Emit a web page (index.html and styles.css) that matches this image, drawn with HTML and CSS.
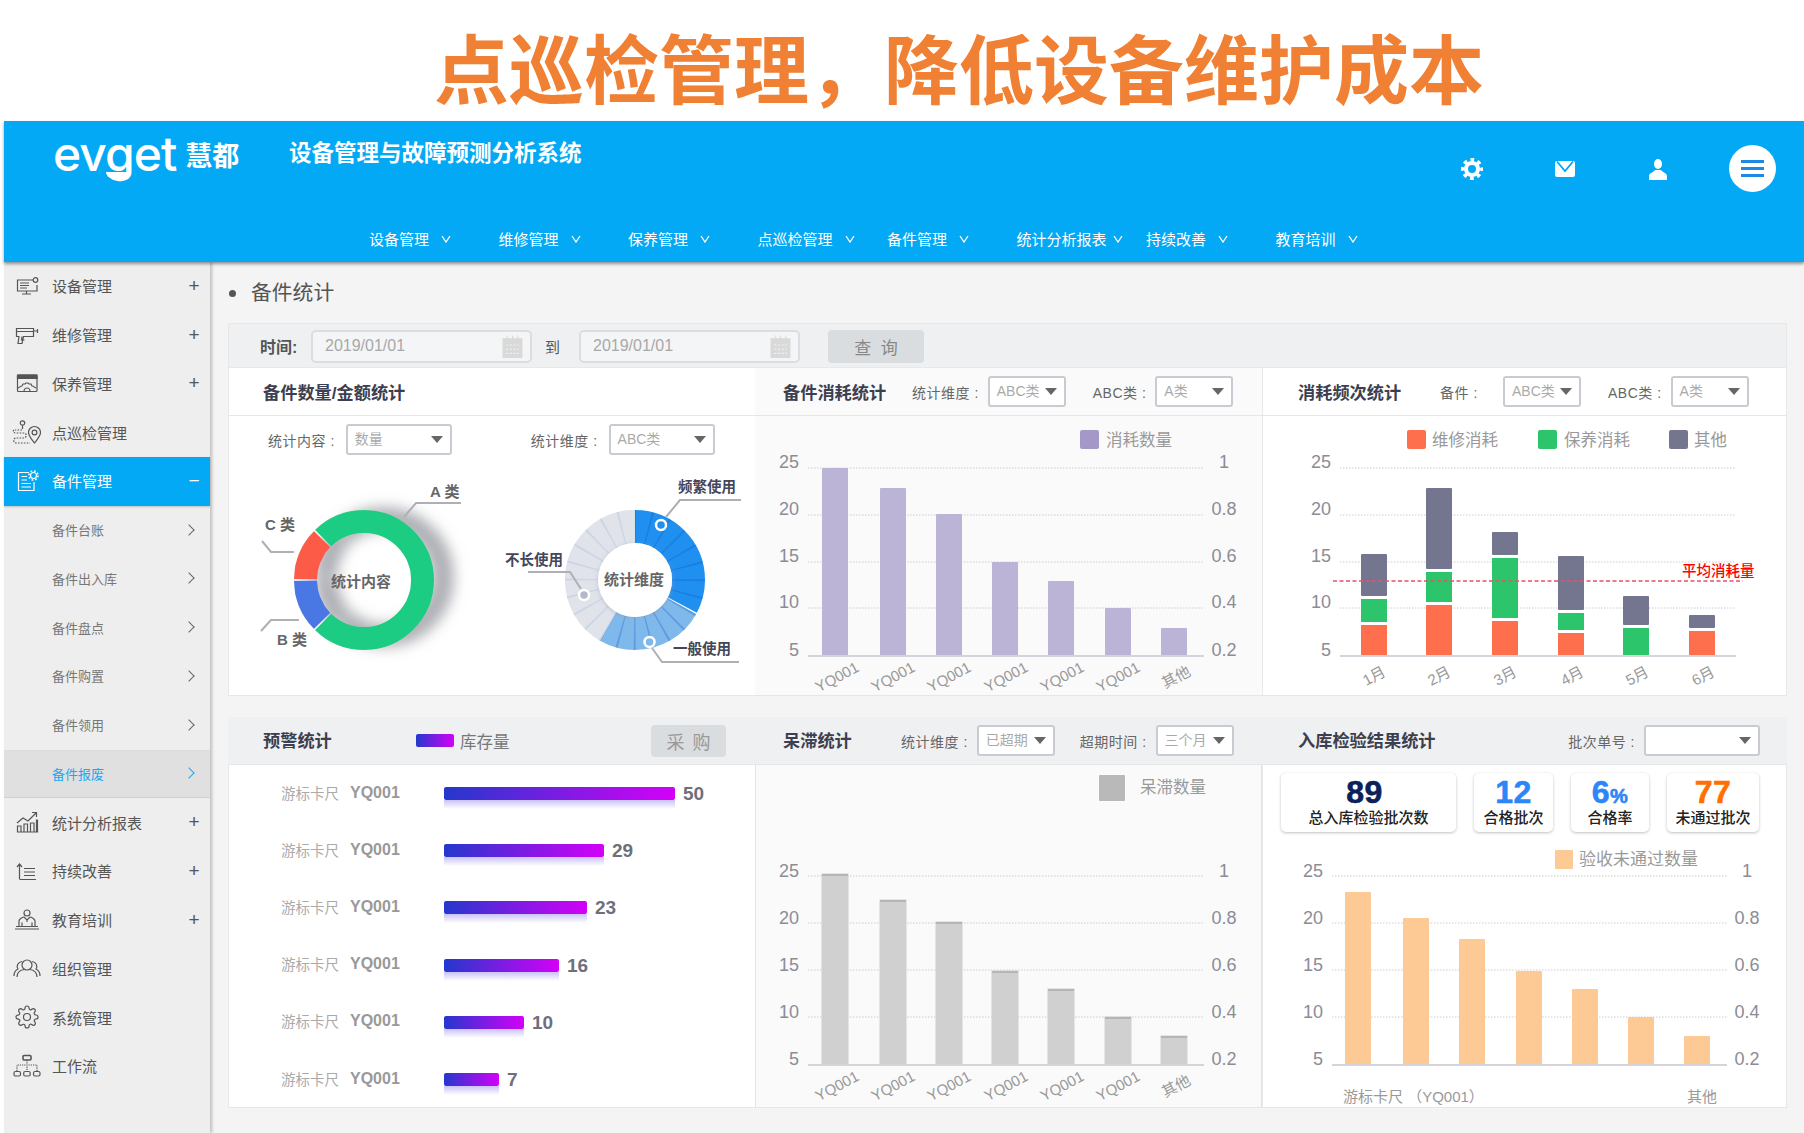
FILE: index.html
```html
<!DOCTYPE html>
<html lang="zh-CN">
<head>
    <meta charset="UTF-8">
    <meta name="viewport" content="width=device-width, initial-scale=1.0">
    <title>点巡检管理，降低设备维护成本</title>
    <link rel="stylesheet" href="styles.css">
</head>
<body>
    <div class="banner">点巡检管理，降低设备维护成本</div>

    <div class="app">
        <header class="topbar">
            <div class="topbar-main">
                <div class="logo"><span class="logo-en">evget</span><span class="logo-cn">慧都</span></div>
                <div class="system-name">设备管理与故障预测分析系统</div>
                <div class="top-icons">
                    <svg class="top-icon" viewBox="0 0 24 24"><circle cx="12" cy="12" r="6" fill="none" stroke="#fff" stroke-width="4"/><circle cx="12" cy="12" r="9" fill="none" stroke="#fff" stroke-width="4" stroke-dasharray="3.6 3.47" stroke-dashoffset="1.8"/></svg>
                    <svg class="top-icon" viewBox="0 0 24 24"><rect x="2" y="4" width="20" height="16" rx="2" fill="#fff"/><path d="M4 4.5 12 14l8-9.500" fill="none" stroke="#04a9f5" stroke-width="1.8"/></svg>
                    <svg class="top-icon" viewBox="0 0 24 24"><ellipse cx="12" cy="7" rx="4" ry="5" fill="#fff"/><path d="M3 23v-4c0-3 5-4 6-6h6c1 2 6 3 6 6v4z" fill="#fff"/></svg>
                    <button class="menu-btn"><span></span><span></span><span></span></button>
                </div>
            </div>
            <nav class="topnav">
                <a class="nav-item">设备管理<svg class="nav-chev" viewBox="0 0 10 8"><path d="M1 1l4 6 4-6"/></svg></a>
                <a class="nav-item">维修管理<svg class="nav-chev" viewBox="0 0 10 8"><path d="M1 1l4 6 4-6"/></svg></a>
                <a class="nav-item">保养管理<svg class="nav-chev" viewBox="0 0 10 8"><path d="M1 1l4 6 4-6"/></svg></a>
                <a class="nav-item">点巡检管理<svg class="nav-chev" viewBox="0 0 10 8"><path d="M1 1l4 6 4-6"/></svg></a>
                <a class="nav-item">备件管理<svg class="nav-chev" viewBox="0 0 10 8"><path d="M1 1l4 6 4-6"/></svg></a>
                <a class="nav-item nav-item-long">统计分析报表<svg class="nav-chev" viewBox="0 0 10 8"><path d="M1 1l4 6 4-6"/></svg></a>
                <a class="nav-item">持续改善<svg class="nav-chev" viewBox="0 0 10 8"><path d="M1 1l4 6 4-6"/></svg></a>
                <a class="nav-item">教育培训<svg class="nav-chev" viewBox="0 0 10 8"><path d="M1 1l4 6 4-6"/></svg></a>
            </nav>
        </header>

        <div class="layout">
            <aside class="sidebar">
                <a class="menu-item">
                    <svg class="menu-icon" viewBox="0 0 30 24"><path d="M21 6H5.500v11H25v-6"/><path d="M8 9h9M8 11.500h9M8 14h7M10 20h9M14.500 17v3"/><circle cx="23.500" cy="6" r="2.300"/></svg>
                    设备管理<i class="mark">+</i>
                </a>
                <a class="menu-item">
                    <svg class="menu-icon" viewBox="0 0 30 24"><path d="M4.500 5.500h17v8h-10l-1.500 7H6l1-7H4.500zM21.500 8H25M25.500 6v4M4.500 8.500h17M10 13.500l-.5 3.500h3"/></svg>
                    维修管理<i class="mark">+</i>
                </a>
                <a class="menu-item">
                    <svg class="menu-icon" viewBox="0 0 30 24"><rect x="5.500" y="4" width="19.500" height="16.500" rx="1"/><path class="fill" d="M5.500 4H25v3.500H5.500z"/><path d="M6 17c2-.5 2-2 4-2l1-2h2l1-1h2l1 1h2l1 2c2 0 2 1.500 4 2M12 20.500c0-2 1.500-3.500 3-3.500s3 1.500 3 3.500"/></svg>
                    保养管理<i class="mark">+</i>
                </a>
                <a class="menu-item">
                    <svg class="menu-icon" viewBox="0 0 30 24"><circle cx="10.500" cy="3" r="2.200"/><path d="M10.500 5.500V9"/><path stroke-dasharray="1.600 1.300" d="M10 10H3M2 10c-2 2 0 3 3 3h7c3 0 3 5 0 5H4c-3 0-3 5 0 5h14"/><path d="M22.500 23c-3-4-6-7-6-10.500a6 6 0 0 1 12 0c0 3.500-3 6.500-6 10.500z"/><circle cx="22.500" cy="12.500" r="2.400"/></svg>
                    点巡检管理
                </a>
                <a class="menu-item active">
                    <svg class="menu-icon" viewBox="0 0 30 24"><path d="M17 3.500H6.500v18H22V13"/><path d="M9.500 7.500H15M9.500 11H15M9.500 14.500h9.500M9.500 18h9.500"/><circle cx="21.500" cy="6.500" r="3"/><circle cx="21.500" cy="6.500" r="4.600" stroke-width="1.500" stroke-dasharray="1.800 1.800"/></svg>
                    备件管理<i class="mark">−</i>
                </a>
                <a class="menu-item sub">备件台账<i class="chev"></i></a>
                <a class="menu-item sub">备件出入库<i class="chev"></i></a>
                <a class="menu-item sub">备件盘点<i class="chev"></i></a>
                <a class="menu-item sub">备件购置<i class="chev"></i></a>
                <a class="menu-item sub">备件领用<i class="chev"></i></a>
                <a class="menu-item sub current">备件报废<i class="chev"></i></a>
                <a class="menu-item">
                    <svg class="menu-icon" viewBox="0 0 30 24"><path d="M5.500 22v-6h3.500v6zM12 22v-8h3.500v8zM18.500 22v-9H22v9zM24.500 22V10H25.500v12zM5 22h21"/><path d="M5 13l6-5 5 3 8-8M20 2.500h4.500V7"/></svg>
                    统计分析报表<i class="mark">+</i>
                </a>
                <a class="menu-item">
                    <svg class="menu-icon" viewBox="0 0 30 24"><path d="M7.500 20V5M5 8l2.500-3L10 8M7.500 20.500H24M12 9.500h11M12 13h11M12 16.500h11"/></svg>
                    持续改善<i class="mark">+</i>
                </a>
                <a class="menu-item">
                    <svg class="menu-icon" viewBox="0 0 30 24"><circle cx="15" cy="5" r="3"/><path d="M7 18v-5c0-2 4-4 5-4l3 3 3-3c1 0 5 2 5 4v5M10 18v-3.500M20 18v-3.500M15 12v2M4 18.500h22M3 21h24"/></svg>
                    教育培训<i class="mark">+</i>
                </a>
                <a class="menu-item">
                    <svg class="menu-icon" viewBox="0 0 30 24"><circle cx="15" cy="9" r="5"/><path d="M5 21c0-5 4-7 7-7.500M25 21c0-5-4-7-7-7.500M2 20c0-4 2-6 4-7-2-3 0-7 4-7.500M28 20c0-4-2-6-4-7 2-3 0-7-4-7.500"/></svg>
                    组织管理
                </a>
                <a class="menu-item">
                    <svg class="menu-icon" viewBox="0 0 24 24"><circle cx="12" cy="12" r="3.500"/><path d="M19.400 15a1.650 1.650 0 0 0 .33 1.820l.06.06a2 2 0 0 1 0 2.830 2 2 0 0 1-2.830 0l-.06-.06a1.650 1.650 0 0 0-1.820-.33 1.650 1.650 0 0 0-1 1.510V21a2 2 0 0 1-2 2 2 2 0 0 1-2-2v-.09A1.650 1.650 0 0 0 9 19.400a1.650 1.650 0 0 0-1.820.33l-.06.06a2 2 0 0 1-2.830 0 2 2 0 0 1 0-2.830l.06-.06a1.650 1.650 0 0 0 .33-1.820 1.650 1.650 0 0 0-1.510-1H3a2 2 0 0 1-2-2 2 2 0 0 1 2-2h.09A1.650 1.650 0 0 0 4.600 9a1.650 1.650 0 0 0-.33-1.820l-.06-.06a2 2 0 0 1 0-2.830 2 2 0 0 1 2.830 0l.06.06a1.650 1.650 0 0 0 1.820.33H9a1.650 1.650 0 0 0 1-1.510V3a2 2 0 0 1 2-2 2 2 0 0 1 2 2v.09a1.650 1.650 0 0 0 1 1.510 1.650 1.650 0 0 0 1.820-.33l.06-.06a2 2 0 0 1 2.830 0 2 2 0 0 1 0 2.830l-.06.06a1.650 1.650 0 0 0-.33 1.820V9a1.650 1.650 0 0 0 1.510 1H21a2 2 0 0 1 2 2 2 2 0 0 1-2 2h-.09a1.650 1.650 0 0 0-1.510 1z"/></svg>
                    系统管理
                </a>
                <a class="menu-item">
                    <svg class="menu-icon" viewBox="0 0 30 24"><rect x="11" y="1.500" width="8" height="4.500" rx="1" stroke-width="1.600"/><rect x="2" y="17.500" width="6.500" height="4.500" rx="1.500"/><rect x="11.700" y="17.500" width="6.500" height="4.500" rx="1.500"/><rect x="21.500" y="17.500" width="6.500" height="4.500" rx="1.500"/><path stroke-dasharray="1.200 1" d="M15 6v11.500M5 17v-6h20v6"/></svg>
                    工作流
                </a>
            </aside>

            <main class="content">
                <h2 class="page-title">备件统计</h2>

                <div class="query-bar">
                    <span class="query-label">时间:</span>
                    <div class="date-input">2019/01/01
                        <svg class="cal-icon" viewBox="0 0 20 22"><path d="M1 4h18v18H1zM5 1v5M10 1v5M15 1v5" fill="#d9d9d9" stroke="#d9d9d9"/><path d="M4 10h12M4 14h12M4 18h12" stroke="#f2f2f2" stroke-dasharray="2 1.500"/></svg>
                    </div>
                    <span class="query-to">到</span>
                    <div class="date-input">2019/01/01
                        <svg class="cal-icon" viewBox="0 0 20 22"><path d="M1 4h18v18H1zM5 1v5M10 1v5M15 1v5" fill="#d9d9d9" stroke="#d9d9d9"/><path d="M4 10h12M4 14h12M4 18h12" stroke="#f2f2f2" stroke-dasharray="2 1.500"/></svg>
                    </div>
                    <button class="btn-gray query-btn">查 询</button>
                </div>

                <section class="board board-top">
                    <div class="panel">
                        <div class="panel-head">
                            <h3 class="panel-title">备件数量/金额统计</h3>
                        </div>
                        <div class="select-row">
                            <div class="ctl"><label>统计内容 :</label><div class="sel sel-wide">数量</div></div>
                            <div class="ctl"><label>统计维度 :</label><div class="sel sel-wide">ABC类</div></div>
                        </div>
                        <svg class="donuts" width="527" height="236" viewBox="228 460 527 236">
                            <defs>
                                <filter id="ringShadow" x="-40%" y="-40%" width="190%" height="190%"><feDropShadow dx="3" dy="20" stdDeviation="7" flood-color="#8f9198" flood-opacity=".72"/></filter>
                                <filter id="holeShadow" x="-30%" y="-30%" width="160%" height="160%"><feDropShadow dx="0" dy="1" stdDeviation="2" flood-color="#99a" flood-opacity=".5"/></filter>
                            </defs>
                            <g class="arc" transform="rotate(-90 364 580)" filter="url(#ringShadow)" fill="none" stroke-width="23">
                                <circle cx="364" cy="580" r="58.500" pathLength="360" stroke="#1fcc82" stroke-dasharray="268.600 91.400" stroke-dashoffset="-315.700"/>
                                <circle cx="364" cy="580" r="58.500" pathLength="360" stroke="#fc5c46" stroke-dasharray="43.600 316.400" stroke-dashoffset="-270.700"/>
                                <circle cx="364" cy="580" r="58.500" pathLength="360" stroke="#4878e4" stroke-dasharray="43.600 316.400" stroke-dashoffset="-225.700"/>
                            </g>
                            <text class="ring-center" x="361" y="587" text-anchor="middle">统计内容</text>
                            <polyline class="leader" points="404,517 416,503 461,503"/>
                            <polyline class="leader" points="262,541 271,552 294,552"/>
                            <polyline class="leader" points="261,631 271,620 299,620"/>
                            <text class="ring-label" x="430" y="497">A 类</text>
                            <text class="ring-label" x="265" y="530">C 类</text>
                            <text class="ring-label" x="277" y="645">B 类</text>

                            <g transform="rotate(-90 635 580)" fill="none" stroke-width="33">
                                <circle cx="635" cy="580" r="53.500" pathLength="360" stroke="#2090f0" stroke-dasharray="118 242"/>
                                <circle cx="635" cy="580" r="53.500" pathLength="360" stroke="#7fb9ec" stroke-dasharray="91 269" stroke-dashoffset="-119"/>
                                <circle cx="635" cy="580" r="53.500" pathLength="360" stroke="#e0e3ea" stroke-dasharray="150 210" stroke-dashoffset="-210"/>
                                <circle cx="635" cy="580" r="53.500" stroke="#0a50c0" stroke-opacity=".28" stroke-dasharray="1.600 12.406" stroke-dashoffset=".8"/>
                                <circle cx="635" cy="580" r="53.500" pathLength="360" stroke="#e0e3ea" stroke-opacity=".65" stroke-dasharray="150 210" stroke-dashoffset="-210"/>
                            </g>
                            <circle cx="635" cy="580" r="37" fill="#fff" filter="url(#holeShadow)"/>
                            <text class="ring-center" x="634" y="585" text-anchor="middle">统计维度</text>
                            <polyline class="leader" points="666,517 680,500 741,500"/>
                            <polyline class="leader" points="528,572 570,572 581,589"/>
                            <polyline class="leader" points="652,648 662,662 739,662"/>
                            <circle cx="661" cy="525" r="5" fill="#2090f0" stroke="#fff" stroke-width="2.500"/>
                            <circle cx="584" cy="595" r="5" fill="#b4b8cb" stroke="#fff" stroke-width="2.500"/>
                            <circle cx="649.500" cy="642" r="5" fill="#7fb9ec" stroke="#fff" stroke-width="2.500"/>
                            <text class="ring-tag" x="678" y="492">频繁使用</text>
                            <text class="ring-tag" x="505" y="565">不长使用</text>
                            <text class="ring-tag" x="673" y="654">一般使用</text>
                        </svg>
                    </div>

                    <div class="panel panel-soft">
                        <div class="panel-head panel-head-2">
                            <h3 class="panel-title title-129">备件消耗统计</h3>
                            <div class="ctl"><label>统计维度 :</label><div class="sel">ABC类</div></div>
                            <div class="ctl"><label>ABC类 :</label><div class="sel">A类</div></div>
                        </div>
                        <svg class="chart" width="507" height="280" viewBox="755 416 507 280">
                            <rect x="1080" y="430" width="19" height="19" rx="2" fill="#a498c6"/>
                            <text class="legend" x="1106" y="446">消耗数量</text>
                            <path class="grid" d="M808 468H1204M808 515H1204M808 562H1204M808 608H1204"/>
                            <g class="ticks" text-anchor="end"><text x="799" y="468">25</text><text x="799" y="515">20</text><text x="799" y="562">15</text><text x="799" y="608">10</text><text x="799" y="656">5</text></g>
                            <g class="ticks" text-anchor="middle"><text x="1224" y="468">1</text><text x="1224" y="515">0.8</text><text x="1224" y="562">0.6</text><text x="1224" y="608">0.4</text><text x="1224" y="656">0.2</text></g>
                            <g fill="#bbb4d6">
                                <rect x="822" y="468" width="26" height="188" rx="1"/>
                                <rect x="880" y="488" width="26" height="168" rx="1"/>
                                <rect x="936" y="514" width="26" height="142" rx="1"/>
                                <rect x="992" y="562" width="26" height="94" rx="1"/>
                                <rect x="1048" y="581" width="26" height="75" rx="1"/>
                                <rect x="1105" y="608" width="26" height="48" rx="1"/>
                                <rect x="1161" y="628" width="26" height="28" rx="1"/>
                            </g>
                            <path class="base" d="M808 656H1204"/>
                            <g class="xlab" text-anchor="middle">
                                <text transform="translate(837 677) rotate(-28)" dy=".35em">YQ001</text>
                                <text transform="translate(893 677) rotate(-28)" dy=".35em">YQ001</text>
                                <text transform="translate(949 677) rotate(-28)" dy=".35em">YQ001</text>
                                <text transform="translate(1006 677) rotate(-28)" dy=".35em">YQ001</text>
                                <text transform="translate(1062 677) rotate(-28)" dy=".35em">YQ001</text>
                                <text transform="translate(1118 677) rotate(-28)" dy=".35em">YQ001</text>
                                <text transform="translate(1176 677) rotate(-28)" dy=".35em">其他</text>
                            </g>
                        </svg>
                    </div>

                    <div class="panel">
                        <div class="panel-head panel-head-3">
                            <h3 class="panel-title title-142">消耗频次统计</h3>
                            <div class="ctl ctl-parts"><label>备件 :</label><div class="sel">ABC类</div></div>
                            <div class="ctl"><label>ABC类 :</label><div class="sel">A类</div></div>
                        </div>
                        <svg class="chart" width="525" height="280" viewBox="1262 416 525 280">
                            <rect x="1407" y="430" width="19" height="19" rx="2" fill="#fe6f4e"/>
                            <text class="legend" x="1432" y="446">维修消耗</text>
                            <rect x="1538" y="430" width="19" height="19" rx="2" fill="#2dc56b"/>
                            <text class="legend" x="1564" y="446">保养消耗</text>
                            <rect x="1669" y="430" width="19" height="19" rx="2" fill="#74768f"/>
                            <text class="legend" x="1694" y="446">其他</text>
                            <path class="grid" d="M1340 468H1736M1340 515H1736M1340 562H1736M1340 608H1736"/>
                            <g class="ticks" text-anchor="end"><text x="1331" y="468">25</text><text x="1331" y="515">20</text><text x="1331" y="562">15</text><text x="1331" y="608">10</text><text x="1331" y="656">5</text></g>
                            <g fill="#74768f">
                                <rect x="1361" y="554" width="26" height="42" rx="1"/>
                                <rect x="1426" y="488" width="26" height="81" rx="1"/>
                                <rect x="1492" y="532" width="26" height="23" rx="1"/>
                                <rect x="1558" y="556" width="26" height="54" rx="1"/>
                                <rect x="1623" y="596" width="26" height="29" rx="1"/>
                                <rect x="1689" y="615" width="26" height="13" rx="1"/>
                            </g>
                            <g fill="#2dc56b">
                                <rect x="1361" y="599" width="26" height="23"/>
                                <rect x="1426" y="572" width="26" height="30"/>
                                <rect x="1492" y="558" width="26" height="60"/>
                                <rect x="1558" y="613" width="26" height="17"/>
                                <rect x="1623" y="628" width="26" height="27"/>
                            </g>
                            <g fill="#fe6f4e">
                                <rect x="1361" y="625" width="26" height="30"/>
                                <rect x="1426" y="605" width="26" height="50"/>
                                <rect x="1492" y="621" width="26" height="34"/>
                                <rect x="1558" y="633" width="26" height="22"/>
                                <rect x="1689" y="631" width="26" height="24"/>
                            </g>
                            <path class="base" d="M1340 656H1736"/>
                            <path class="avg-line" d="M1333 581H1743"/>
                            <text class="avg-text" x="1682" y="576">平均消耗量</text>
                            <g class="xlab" text-anchor="middle">
                                <text transform="translate(1374 676) rotate(-28)" dy=".35em">1月</text>
                                <text transform="translate(1439 676) rotate(-28)" dy=".35em">2月</text>
                                <text transform="translate(1505 676) rotate(-28)" dy=".35em">3月</text>
                                <text transform="translate(1572 676) rotate(-28)" dy=".35em">4月</text>
                                <text transform="translate(1637 676) rotate(-28)" dy=".35em">5月</text>
                                <text transform="translate(1703 676) rotate(-28)" dy=".35em">6月</text>
                            </g>
                        </svg>
                    </div>
                </section>

                <section class="board board-bottom">
                    <div class="panel">
                        <div class="panel-head panel-head-gray">
                            <h3 class="panel-title title-153">预警统计</h3>
                            <span class="grad-key"></span>
                            <span class="grad-text">库存量</span>
                            <button class="btn-gray buy-btn">采 购</button>
                        </div>
                        <div class="rank-list">
                            <div class="rank-row"><span class="rank-name">游标卡尺</span><b class="rank-code">YQ001</b><span class="rank-bar" style="width:231px"></span><b class="rank-num">50</b></div>
                            <div class="rank-row"><span class="rank-name">游标卡尺</span><b class="rank-code">YQ001</b><span class="rank-bar" style="width:160px"></span><b class="rank-num">29</b></div>
                            <div class="rank-row"><span class="rank-name">游标卡尺</span><b class="rank-code">YQ001</b><span class="rank-bar" style="width:143px"></span><b class="rank-num">23</b></div>
                            <div class="rank-row"><span class="rank-name">游标卡尺</span><b class="rank-code">YQ001</b><span class="rank-bar" style="width:115px"></span><b class="rank-num">16</b></div>
                            <div class="rank-row"><span class="rank-name">游标卡尺</span><b class="rank-code">YQ001</b><span class="rank-bar" style="width:80px"></span><b class="rank-num">10</b></div>
                            <div class="rank-row"><span class="rank-name">游标卡尺</span><b class="rank-code">YQ001</b><span class="rank-bar" style="width:55px"></span><b class="rank-num">7</b></div>
                        </div>
                    </div>

                    <div class="panel panel-soft">
                        <div class="panel-head panel-head-gray panel-head-2">
                            <h3 class="panel-title title-118">呆滞统计</h3>
                            <div class="ctl"><label>统计维度 :</label><div class="sel">已超期</div></div>
                            <div class="ctl ctl-close"><label>超期时间 :</label><div class="sel">三个月</div></div>
                        </div>
                        <svg class="chart" width="507" height="343" viewBox="755 765 507 343">
                            <rect x="1099" y="775" width="26" height="26" rx="1" fill="#b9b9b9"/>
                            <text class="legend" x="1140" y="793">呆滞数量</text>
                            <path class="grid" d="M808 876H1204M808 923H1204M808 970H1204M808 1017H1204"/>
                            <g class="ticks" text-anchor="end"><text x="799" y="877">25</text><text x="799" y="924">20</text><text x="799" y="971">15</text><text x="799" y="1018">10</text><text x="799" y="1065">5</text></g>
                            <g class="ticks" text-anchor="middle"><text x="1224" y="877">1</text><text x="1224" y="924">0.8</text><text x="1224" y="971">0.6</text><text x="1224" y="1018">0.4</text><text x="1224" y="1065">0.2</text></g>
                            <g fill="#d0d0d0" stroke="#d0d0d0">
                                <rect x="822" y="874" width="26" height="191"/>
                                <rect x="880" y="900" width="26" height="165"/>
                                <rect x="936" y="922" width="26" height="143"/>
                                <rect x="992" y="971" width="26" height="94"/>
                                <rect x="1048" y="989" width="26" height="76"/>
                                <rect x="1105" y="1017" width="26" height="48"/>
                                <rect x="1161" y="1036" width="26" height="29"/>
                            </g>
                            <path class="bar-cap" d="M822 875h26M880 901h26M936 923h26M992 972h26M1048 990h26M1105 1018h26M1161 1037h26"/>
                            <path class="base" d="M808 1065H1204"/>
                            <g class="xlab" text-anchor="middle">
                                <text transform="translate(837 1086) rotate(-28)" dy=".35em">YQ001</text>
                                <text transform="translate(893 1086) rotate(-28)" dy=".35em">YQ001</text>
                                <text transform="translate(949 1086) rotate(-28)" dy=".35em">YQ001</text>
                                <text transform="translate(1006 1086) rotate(-28)" dy=".35em">YQ001</text>
                                <text transform="translate(1062 1086) rotate(-28)" dy=".35em">YQ001</text>
                                <text transform="translate(1118 1086) rotate(-28)" dy=".35em">YQ001</text>
                                <text transform="translate(1176 1086) rotate(-28)" dy=".35em">其他</text>
                            </g>
                        </svg>
                    </div>

                    <div class="panel">
                        <div class="panel-head panel-head-gray panel-head-3">
                            <h3 class="panel-title">入库检验结果统计</h3>
                            <div class="ctl ctl-right"><label>批次单号 :</label><div class="sel sel-batch"></div></div>
                        </div>
                        <div class="stat-row">
                            <div class="stat stat-total"><strong class="num-navy">89</strong><span>总入库检验批次数</span></div>
                            <div class="stat stat-ok"><strong class="num-blue">12</strong><span>合格批次</span></div>
                            <div class="stat stat-rate"><strong class="num-blue">6<small>%</small></strong><span>合格率</span></div>
                            <div class="stat stat-fail"><strong class="num-orange">77</strong><span>未通过批次</span></div>
                        </div>
                        <svg class="chart" width="525" height="276" viewBox="1262 832 525 276">
                            <rect x="1555" y="850" width="18" height="19" rx="1" fill="#fdca96"/>
                            <text class="legend legend-long" x="1579" y="865">验收未通过数量</text>
                            <path class="grid" d="M1332 876H1727M1332 923H1727M1332 970H1727M1332 1017H1727"/>
                            <g class="ticks" text-anchor="end"><text x="1323" y="877">25</text><text x="1323" y="924">20</text><text x="1323" y="971">15</text><text x="1323" y="1018">10</text><text x="1323" y="1065">5</text></g>
                            <g class="ticks" text-anchor="middle"><text x="1747" y="877">1</text><text x="1747" y="924">0.8</text><text x="1747" y="971">0.6</text><text x="1747" y="1018">0.4</text><text x="1747" y="1065">0.2</text></g>
                            <g fill="#fdca96">
                                <rect x="1345" y="892" width="26" height="173" rx="1"/>
                                <rect x="1403" y="918" width="26" height="147" rx="1"/>
                                <rect x="1459" y="939" width="26" height="126" rx="1"/>
                                <rect x="1516" y="971" width="26" height="94" rx="1"/>
                                <rect x="1572" y="989" width="26" height="76" rx="1"/>
                                <rect x="1628" y="1017" width="26" height="48" rx="1"/>
                                <rect x="1684" y="1036" width="26" height="29" rx="1"/>
                            </g>
                            <path class="base" d="M1332 1065H1727"/>
                            <text class="xlab" x="1343" y="1102">游标卡尺 （YQ001）</text>
                            <text class="xlab" x="1687" y="1102">其他</text>
                        </svg>
                    </div>
                </section>
            </main>
        </div>
    </div>
</body>
</html>
```

FILE: styles.css
```css
* { box-sizing: border-box; }
body { margin: 0; background: #fff; font-family: "Liberation Sans", "Noto Sans CJK SC", sans-serif; color: #555; }
h2, h3 { margin: 0; }
button { font-family: inherit; border: none; }

.banner { height: 121px; padding: 12px 0 0 434px; font-size: 75px; line-height: 120px; font-weight: 700; color: #f08034; white-space: nowrap; overflow: hidden; }

.app { margin-left: 4px; background: #f4f4f4; }

/* top bar */
.topbar { position: relative; z-index: 2; height: 141px; background: #04a9f5; box-shadow: 0 2px 3px rgba(0,0,0,0.4); color: #fff; }
.topbar-main { display: flex; height: 94px; padding-left: 49px; }
.logo { position: relative; display: flex; height: 60px; align-items: center; margin-top: 3px; width: 236px; }
.logo-en { font-family: Inter, sans-serif; font-size: 48px; font-weight: 500; letter-spacing: -1px; line-height: 60px; }
.logo-cn { font-family: "Noto Sans CJK SC", sans-serif; font-size: 27px; font-weight: 700; margin-left: 9px; }
.logo::after { content: ""; position: absolute; left: 53px; top: 48px; width: 25px; height: 6px; background: #fff; border-radius: 0 0 14px 14px; }
.system-name { margin-top: 14px; font-size: 22.500px; line-height: 38px; font-weight: 700; white-space: nowrap; }
.top-icons { display: flex; align-items: center; margin-left: auto; height: 47px; margin-top: 24px; padding-right: 28px; }
.top-icon { width: 24px; height: 24px; margin-right: 69px; }
.menu-btn { display: flex; flex-direction: column; justify-content: center; gap: 4px; width: 47px; height: 47px; margin-left: -10px; padding: 0 12px; border-radius: 50%; background: #fff; }
.menu-btn span { display: block; height: 3px; background: #1e88e5; }
.topnav { display: flex; padding-left: 365px; height: 47px; }
.nav-item { display: flex; align-items: center; width: 129.500px; flex: none; font-size: 15px; white-space: nowrap; }
.nav-chev { width: 10px; height: 8px; margin-left: 12px; fill: none; stroke: #fff; stroke-width: 1.300; }
.nav-item-long .nav-chev { margin-left: 6px; }

/* side menu */
.layout { display: flex; }
.sidebar { width: 206px; flex: none; min-height: 871px; background: #eee; box-shadow: 2px 0 3px rgba(0,0,0,0.22); position: relative; z-index: 1; }
.menu-item { display: flex; align-items: center; height: 48.750px; padding: 0 0 1px 8px; font-size: 15px; color: #555; }
.menu-icon { width: 30px; height: 24px; margin-right: 10px; flex: none; fill: none; stroke: #555; stroke-width: 1.200; }
.menu-icon .fill { fill: #555; }
.mark { margin-left: auto; margin-right: 7px; width: 18px; text-align: center; font-style: normal; font-size: 19px; }
.sub { padding-left: 48px; font-size: 13px; color: #777; }
.chev { margin-left: auto; margin-right: 17px; width: 8px; height: 8px; border-top: 1.300px solid #666; border-right: 1.300px solid #666; transform: rotate(45deg); }
.active { background: #04a9f5; color: #fff; box-shadow: 0 1px 2px rgba(0,0,0,0.2); }
.active .menu-icon { stroke: #fff; }
.current { background: #e0e0e0; color: #1ea7f0; border-top: 1px solid #ddd; border-bottom: 1px solid #d0d0d0; }
.current .chev { border-color: #1ea7f0; }

/* main area */
.content { flex: 1; padding: 0 17px 25px 18px; }
.page-title { position: relative; height: 61px; padding-left: 23px; font-size: 20.800px; line-height: 62px; font-weight: 400; color: #555; }
.page-title::before { content: ""; position: absolute; left: 1px; top: 28px; width: 7px; height: 7px; border-radius: 50%; background: #555; }

.query-bar { display: flex; align-items: center; height: 45px; padding: 1px 0 0 32px; background: #eff0f2; box-shadow: inset 0 0 0 1px #e8e8e8; }
.query-label { width: 51px; font-size: 16px; font-weight: 700; color: #555; }
.query-to { width: 47px; padding-left: 13px; font-size: 15px; }
.date-input { display: flex; align-items: center; justify-content: space-between; width: 221px; height: 33px; padding: 0 7px 0 12px; border: 2px solid #dcdde0; border-radius: 5px; background: #f4f5f6; font-size: 16px; color: #a8a8a8; }
.query-to + .date-input { margin-right: 28px; }
.cal-icon { width: 21px; height: 24px; }
.btn-gray { background: #d9dde0; border-radius: 4px; color: #888; }
.query-btn { width: 96px; height: 33px; font-size: 17px; word-spacing: 5px; }

.board { display: grid; grid-template-columns: 527px 507px 525px; background: #fff; }
.board-top { height: 328px; box-shadow: inset 0 -1px 0 #e6e6e6; }
.board-bottom { height: 391px; margin-top: 21px; box-shadow: inset 0 -1px 0 #e6e6e6, inset 0 1px 0 #e8e8e8; }
.panel { min-width: 0; box-shadow: inset 1px 0 0 #e8e8e8, inset 0 -1px 0 #e6e6e6; background: #fff; }
.panel:last-child { box-shadow: inset 1px 0 0 #e8e8e8, inset -1px 0 0 #e8e8e8, inset 0 -1px 0 #e6e6e6; }
.panel-soft { background: #fafafa; box-shadow: inset 0 -1px 0 #e6e6e6; }
.board-bottom .panel-soft { box-shadow: inset 1px 0 0 #e2e4e6, inset -1px 0 0 #e2e4e6, inset 0 -1px 0 #e6e6e6; }

.panel-head { display: flex; align-items: center; height: 48px; padding-left: 35px; border-bottom: 1px solid #e6e6e6; }
.panel-head-2 { padding-left: 28px; }
.panel-head-3 { padding-left: 36px; }
.panel-head-gray { background: #eff0f2; }
.panel-head-gray .panel-title { margin-top: -2px; }
.panel-title { font-size: 17.200px; font-weight: 700; color: #3c3f50; white-space: nowrap; }
.title-129 { width: 129px; }
.title-142 { width: 142px; }
.title-118 { width: 118px; }
.title-153 { width: 153px; }

.ctl { display: flex; align-items: center; gap: 9px; }
.ctl + .ctl { margin-left: 27px; }
.ctl + .ctl-close { margin-left: 25px; }
.ctl label { font-size: 14px; letter-spacing: .5px; color: #666; white-space: nowrap; }
.ctl-parts label { min-width: 54px; }
.ctl-right { margin-left: auto; margin-right: 27px; }
.sel { position: relative; width: 78px; height: 31px; padding-left: 7px; border: 2px solid #c8ccd2; border-radius: 3px; background: #fff; font-size: 14px; line-height: 27px; color: #aaa; white-space: nowrap; }
.sel::after { content: ""; position: absolute; right: 7px; top: 10px; border-top: 7px solid #666; border-left: 6px solid transparent; border-right: 6px solid transparent; }
.sel-wide { width: 106px; }
.sel-batch { width: 116px; }

.select-row { display: flex; align-items: center; height: 31px; margin: 8px 0 5px; padding-left: 40px; }
.select-row .ctl { gap: 11px; }
.select-row .ctl + .ctl { margin-left: 79px; }
.donuts, .chart { display: block; }
.donuts { overflow: visible; }

/* chart text and lines */
.ring-center { font-size: 15px; font-weight: 700; fill: #666; }
.ring-label { font-size: 15px; font-weight: 700; fill: #666; }
.ring-tag { font-size: 14.500px; font-weight: 700; fill: #44465a; }
.leader { fill: none; stroke: #aeb0b4; stroke-width: 2; }
.legend { font-size: 16.500px; fill: #999; }
.legend-long { font-size: 17px; }
.grid { stroke: #ccc; stroke-width: 1; stroke-dasharray: 1.500 1.500; fill: none; }
.base { stroke: #d4d4da; stroke-width: 2; fill: none; }
.ticks { font-size: 18px; fill: #8c8c96; }
.xlab { font-size: 15px; fill: #999; }
.bar-cap { stroke: #b5b5b5; stroke-width: 2; fill: none; }
.avg-line { stroke: #e8506a; stroke-width: 1.500; stroke-dasharray: 4 2.500; fill: none; }
.avg-text { font-size: 14.500px; font-weight: 500; fill: #f00; }

/* warning list */
.grad-key { width: 38px; height: 13px; border-radius: 2px; background: linear-gradient(90deg, #2438cc, #d400f8); }
.grad-text { margin-left: 6px; font-size: 16.500px; color: #777; }
.buy-btn { width: 75px; height: 32px; margin-left: auto; margin-right: 29px; font-size: 18px; word-spacing: 3px; color: #999; }
.rank-row { display: flex; align-items: center; height: 57.200px; padding-left: 53px; }
.rank-name { width: 69px; margin-top: -3px; font-size: 14.500px; color: #aaa; }
.rank-code { width: 94px; margin-top: -2px; font-size: 16px; color: #999; }
.rank-bar { position: relative; height: 13px; border-radius: 2px; background: linear-gradient(90deg, #2438cc, #d400f8); }
.rank-bar::after { content: ""; position: absolute; left: 0; right: 0; top: 13px; height: 9px; background: linear-gradient(rgba(100,80,230,0.35), rgba(100,80,230,0)); }
.rank-num { margin: 1px 0 0 8px; font-size: 19px; color: #6f6f7c; }

/* acceptance cards */
.stat-row { display: flex; gap: 18px; height: 67px; padding: 8px 0 0 19px; }
.stat { display: flex; flex-direction: column; align-items: center; height: 59px; border-radius: 5px; background: #fff; box-shadow: 0 1px 3px rgba(0,0,0,0.25); }
.stat strong { font-size: 32px; line-height: 34px; margin-top: 2px; font-weight: 700; letter-spacing: .5px; -webkit-text-stroke: .6px currentColor; }
.stat small { font-size: 20px; line-height: 1; }
.stat span { font-size: 15px; line-height: 18px; font-weight: 500; color: #222; white-space: nowrap; }
.stat-total { width: 175px; }
.stat-total strong { margin-right: 8px; }
.stat-ok { width: 79px; }
.stat-rate { width: 78px; }
.stat-fail { width: 92px; }
.num-navy { color: #0a2159; }
.num-blue { color: #2d86f5; }
.num-orange { color: #ff7000; }
```
